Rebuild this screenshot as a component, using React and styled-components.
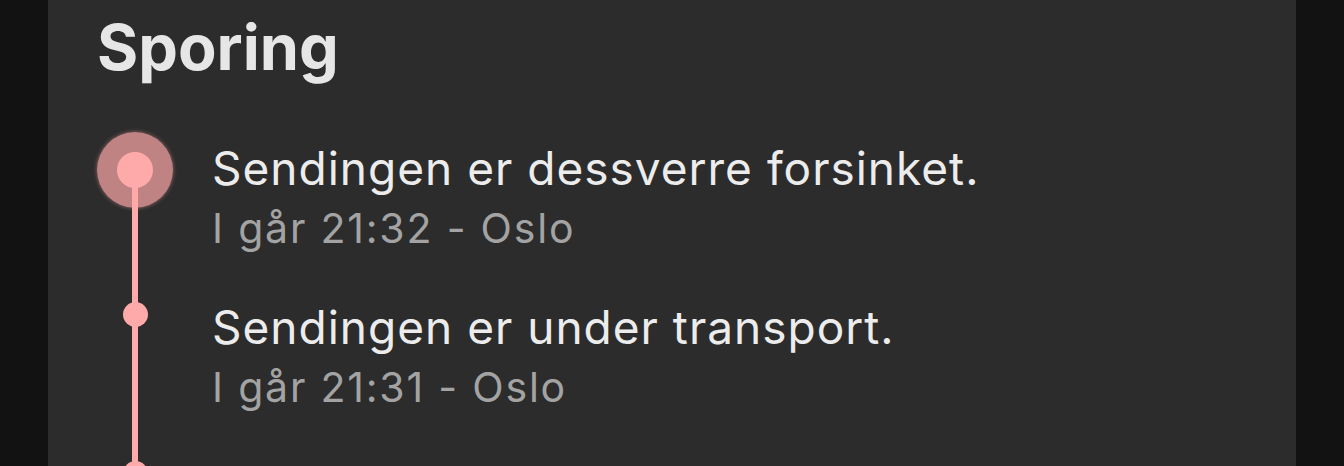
import React from 'react'
import styled, { createGlobalStyle } from 'styled-components'

const GlobalStyle = createGlobalStyle`
  html, body {
    margin: 0;
    padding: 0;
    background: #121212;
    height: 100%;
    overflow: hidden;
  }
  #root {
    height: 100%;
  }
`

const Page = styled.div`
  height: 100%;
  padding: 0 48px;
  box-sizing: border-box;
`

const Card = styled.section`
  height: 100%;
  background: #2c2c2c;
  padding: 0 0 0 49px;
  overflow: hidden;
  font-family: Inter, "Noto Sans", sans-serif;
`

const Title = styled.h2`
  margin: 0;
  padding-top: 9px;
  height: 130px;
  box-sizing: border-box;
  font-size: 63px;
  line-height: 76px;
  font-weight: 700;
  color: #e6e6e6;
`

const Timeline = styled.ol`
  list-style: none;
  margin: 0;
  padding: 0;
`

const Event = styled.li`
  display: grid;
  grid-template-columns: 76px 1fr;
  column-gap: 39px;
  height: 159px;
`

const Rail = styled.div`
  position: relative;
  display: flex;
  flex-direction: column;
  align-items: center;

  &::before {
    content: '';
    position: absolute;
    left: 35px;
    width: 6px;
    top: ${p => (p.$first ? '40px' : '0')};
    bottom: 0;
    background: #ffaaaa;
  }
`

const Ring = styled.span`
  position: relative;
  margin-top: 2px;
  width: 76px;
  height: 76px;
  border-radius: 50%;
  background: rgba(255, 168, 168, 0.7);
  box-shadow: 0 0 4px 0 rgba(255, 168, 168, 0.5);
  display: flex;
  align-items: center;
  justify-content: center;

  &::after {
    content: '';
    width: 36px;
    height: 36px;
    border-radius: 50%;
    background: #ffaaaa;
  }
`

const Dot = styled.span`
  position: relative;
  margin-top: 13px;
  width: 25px;
  height: 25px;
  border-radius: 50%;
  background: #ffaaaa;
`

const Body = styled.div`
  padding-top: 10px;
`

const Status = styled.div`
  font-size: 46px;
  line-height: 56px;
  letter-spacing: 1px;
  color: #ececec;
  white-space: nowrap;
`

const Meta = styled.div`
  margin-top: 4px;
  font-size: 41px;
  line-height: 56px;
  letter-spacing: 1.8px;
  color: #a3a3a3;
  white-space: nowrap;
`

const events = [
  { status: 'Sendingen er dessverre forsinket.', meta: 'I går 21:32 - Oslo', current: true },
  { status: 'Sendingen er under transport.', meta: 'I går 21:31 - Oslo' },
  { status: 'Sendingen er mottatt hos Posten.', meta: 'I går 18:04 - Oslo' },
]

export default function App() {
  return (
    <>
      <GlobalStyle />
      <Page>
        <Card>
          <Title>Sporing</Title>
          <Timeline>
            {events.map((e, i) => (
              <Event key={i}>
                <Rail $first={i === 0}>{e.current ? <Ring /> : <Dot />}</Rail>
                <Body>
                  <Status>{e.status}</Status>
                  <Meta>{e.meta}</Meta>
                </Body>
              </Event>
            ))}
          </Timeline>
        </Card>
      </Page>
    </>
  )
}
